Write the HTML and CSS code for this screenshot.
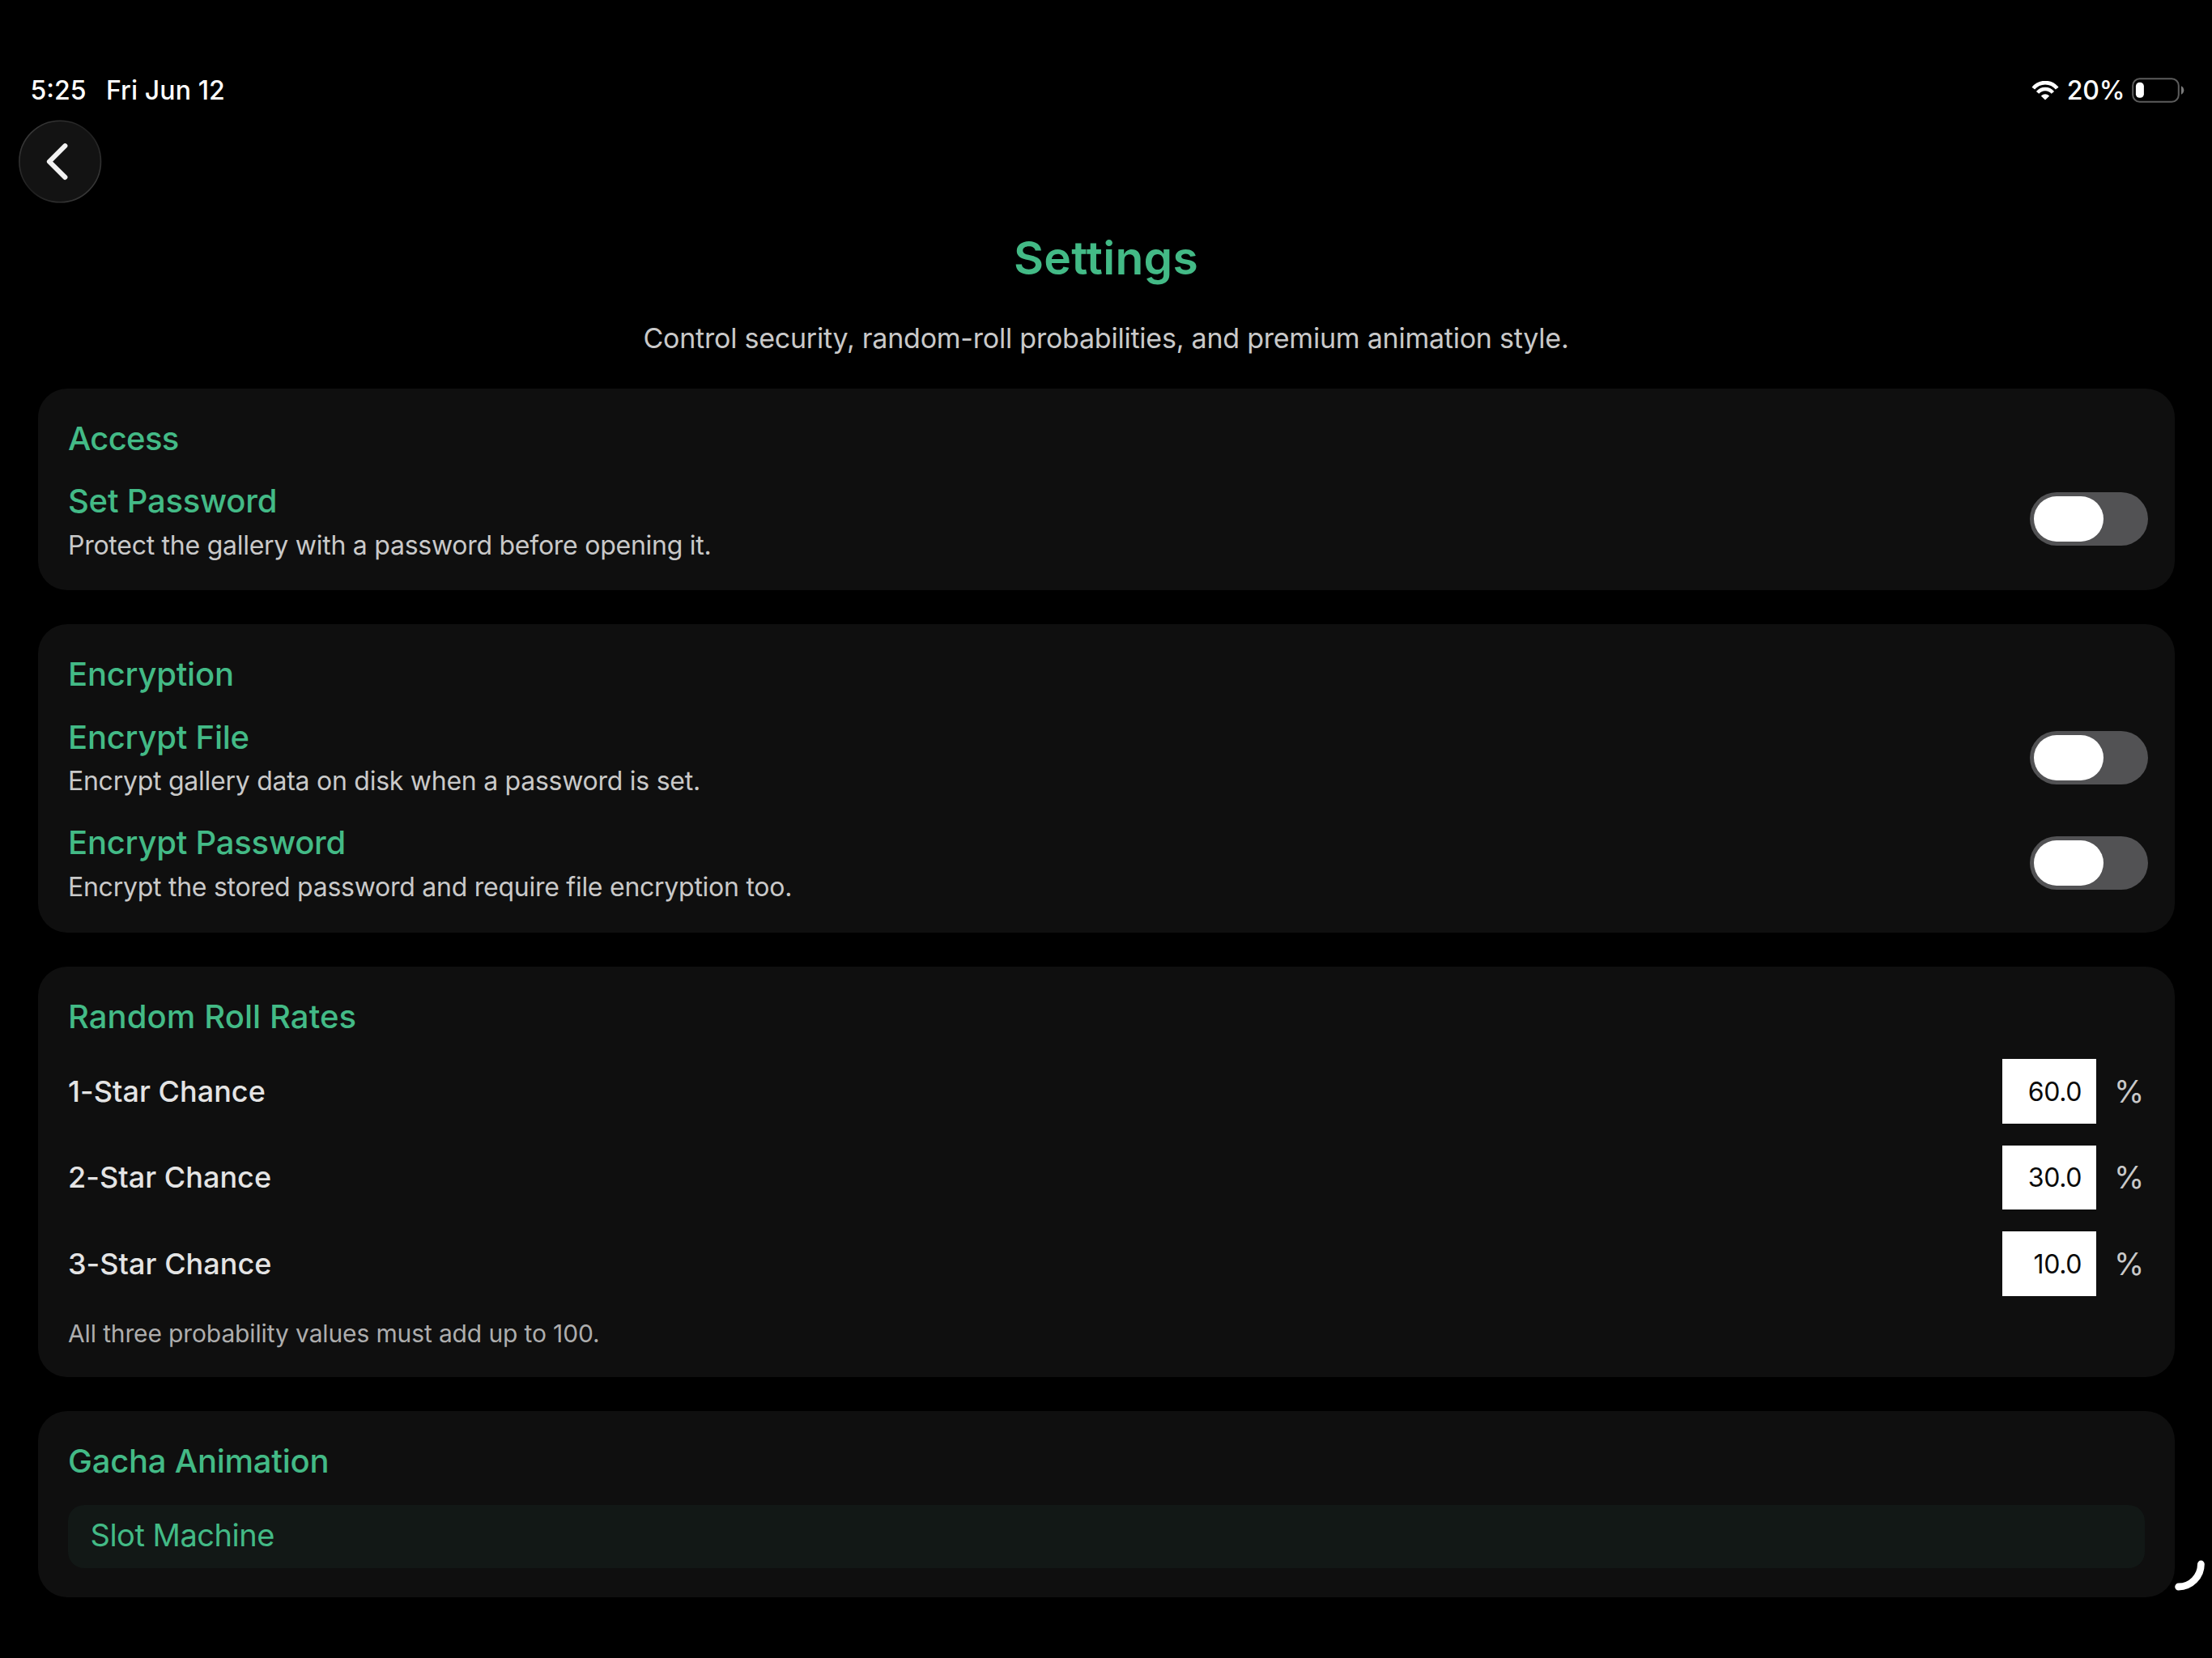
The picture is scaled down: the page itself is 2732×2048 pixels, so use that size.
FILE: index.html
```html
<!DOCTYPE html>
<html lang="en">
<head>
<meta charset="utf-8">
<title>Settings</title>
<link rel="stylesheet" href="styles.css">
</head>
<body>
<header class="status">
  <span class="status-time">5:25</span>
  <span class="status-date">Fri Jun 12</span>
  <svg class="wifi" viewBox="0 0 34 24" aria-hidden="true">
    <path d="M2.3 9.1A18.9 18.9 0 0 1 31.7 9.1" fill="none" stroke="#fff" stroke-width="4.6"/>
    <path d="M7.6 14.4A12.2 12.2 0 0 1 26.4 14.4" fill="none" stroke="#fff" stroke-width="4.4"/>
    <path d="M11.8 18.4Q17 14.3 22.2 18.4L17 23.6Z" fill="#fff"/>
  </svg>
  <span class="status-level">20%</span>
  <svg class="battery" viewBox="0 0 65 31" aria-hidden="true">
    <rect x="1.2" y="1.3" width="56.6" height="28.4" rx="8.5" fill="none" stroke="#5c5c5c" stroke-width="2"/>
    <rect x="4.9" y="5.8" width="10" height="19" rx="4.6" fill="#fff"/>
    <path d="M61 10.3Q64.3 12.2 64.3 15.5Q64.3 18.8 61 20.7Z" fill="#7a7a7a"/>
  </svg>
</header>

<nav class="toolbar">
  <button class="back" aria-label="Back">
    <svg class="back-icon" viewBox="0 0 104 104" aria-hidden="true">
      <defs>
        <linearGradient id="rim" x1="0.1" y1="0.1" x2="0.9" y2="0.9">
          <stop offset="0" stop-color="#3a3a3a"/>
          <stop offset="0.5" stop-color="#1e1e1e"/>
          <stop offset="1" stop-color="#3a3a3a"/>
        </linearGradient>
      </defs>
      <circle cx="51.2" cy="51.5" r="50.3" fill="#131313" stroke="url(#rim)" stroke-width="1.6"/>
      <path d="M57.4 32.2L37.9 51.6L57.4 71" fill="none" stroke="#f2f2f2" stroke-width="6" stroke-linecap="round" stroke-linejoin="round"/>
    </svg>
  </button>
</nav>

<main class="page">
  <h1 class="title">Settings</h1>
  <p class="subtitle">Control security, random-roll probabilities, and premium animation style.</p>

  <section class="card">
    <h2 class="heading heading-tight">Access</h2>
    <div class="option">
      <div class="option-text">
        <h3 class="heading">Set Password</h3>
        <p class="desc">Protect the gallery with a password before opening it.</p>
      </div>
      <span class="toggle toggle-raised" role="switch" aria-checked="false"><span class="knob"></span></span>
    </div>
  </section>

  <section class="card">
    <h2 class="heading">Encryption</h2>
    <div class="option">
      <div class="option-text">
        <h3 class="heading">Encrypt File</h3>
        <p class="desc">Encrypt gallery data on disk when a password is set.</p>
      </div>
      <span class="toggle" role="switch" aria-checked="false"><span class="knob"></span></span>
    </div>
    <div class="option">
      <div class="option-text">
        <h3 class="heading">Encrypt Password</h3>
        <p class="desc">Encrypt the stored password and require file encryption too.</p>
      </div>
      <span class="toggle" role="switch" aria-checked="false"><span class="knob"></span></span>
    </div>
  </section>

  <section class="card">
    <h2 class="heading heading-wide">Random Roll Rates</h2>
    <div class="rates">
      <label class="rate"><span class="rate-label">1-Star Chance</span><input class="rate-input" type="text" value="60.0"><span class="percent">%</span></label>
      <label class="rate"><span class="rate-label">2-Star Chance</span><input class="rate-input" type="text" value="30.0"><span class="percent">%</span></label>
      <label class="rate"><span class="rate-label">3-Star Chance</span><input class="rate-input" type="text" value="10.0"><span class="percent">%</span></label>
    </div>
    <p class="note">All three probability values must add up to 100.</p>
  </section>

  <section class="card">
    <h2 class="heading">Gacha Animation</h2>
    <div class="select">Slot Machine</div>
  </section>
</main>

<svg class="corner-arc" viewBox="0 0 40 40" aria-hidden="true">
  <path d="M32.4 6A28 28 0 0 1 4.6 34" fill="none" stroke="#fff" stroke-width="8.8" stroke-linecap="round"/>
</svg>
</body>
</html>
```
FILE: styles.css
```css
* {
  box-sizing: border-box;
}

body {
  margin: 0;
  width: 2732px;
  height: 2048px;
  overflow: hidden;
  position: relative;
  background: #000;
  color: #fff;
  font-family: Inter, "Liberation Sans", sans-serif;
}

h1, h2, h3, p {
  margin: 0;
}

.status {
  display: flex;
  align-items: center;
  height: 132px;
  padding: 92px 33.7px 0 37.5px;
  font-size: 32px;
  font-weight: 500;
  line-height: 40px;
}

.status-date {
  margin-left: 24.5px;
  letter-spacing: 0.1px;
}

.wifi {
  width: 34px;
  height: 24px;
  margin-left: auto;
}

.status-level {
  margin-left: 10px;
  letter-spacing: -0.2px;
}

.battery {
  width: 65px;
  height: 31px;
  margin: 0 0 1px 9px;
}

.toolbar {
  padding: 16px 0 0 23px;
  height: 118px;
}

.back {
  display: block;
  width: 104px;
  height: 104px;
  padding: 0;
  border: 0;
  background: none;
}

.back-icon {
  display: block;
  width: 104px;
  height: 104px;
}

.page {
  padding: 34px 46px 0 47px;
}

.title {
  padding-right: 1px;
  color: #43ba86;
  font-size: 57px;
  font-weight: 600;
  line-height: 70px;
  letter-spacing: 0.25px;
  text-align: center;
}

.subtitle {
  margin: 43px 0 41px;
  padding-right: 1px;
  color: #c9c9c9;
  font-size: 34px;
  line-height: 42px;
  letter-spacing: -0.23px;
  text-align: center;
}

.card {
  padding: 37px 37px 35.5px;
  border-radius: 36px;
  background: #0f0f0f;
}

.card + .card {
  margin-top: 42px;
}

.heading {
  color: #43ba86;
  font-size: 40px;
  font-weight: 500;
  line-height: 50px;
  letter-spacing: -0.23px;
}

.heading-tight {
  letter-spacing: -0.7px;
}

.heading-wide {
  letter-spacing: 0.09px;
}

.option {
  display: flex;
  align-items: center;
  justify-content: space-between;
  margin-top: 27.3px;
}

.option + .option {
  margin-top: 31px;
}

.desc {
  margin-top: 9.7px;
  color: #c9c9c9;
  font-size: 32px;
  line-height: 40px;
  letter-spacing: -0.26px;
}

.toggle {
  width: 146px;
  height: 66px;
  margin-right: -4px;
  padding: 5px;
  border-radius: 33px;
  background: #525254;
}

.toggle-raised {
  margin-bottom: 6px;
}

.knob {
  display: block;
  width: 86px;
  height: 56px;
  border-radius: 28px;
  background: #fff;
}

.rates {
  display: grid;
  gap: 27px;
  margin-top: 27.5px;
}

.rate {
  display: grid;
  grid-template-columns: 1fr 116px 38px;
  column-gap: 22.5px;
  align-items: center;
}

.rate-label {
  margin-right: -22px;
  color: #e4e4e4;
  font-size: 36px;
  font-weight: 500;
  line-height: 46px;
  letter-spacing: 0.04px;
}

.rate-input {
  width: 116px;
  height: 79.5px;
  padding: 1px 17.5px 0 0;
  border: 0;
  border-radius: 0;
  background: #fff;
  color: #0a0a0a;
  font: 400 32px Inter, "Liberation Sans", sans-serif;
  letter-spacing: -0.4px;
  text-align: right;
}

.percent {
  color: #c9c9c9;
  font-size: 38px;
  line-height: 46px;
}

.note {
  margin-top: 27px;
  color: #adadad;
  font-size: 30px;
  line-height: 38px;
  letter-spacing: -0.132px;
}

.select {
  height: 78.5px;
  margin-top: 28.5px;
  padding: 13.5px 27.5px 0;
  border-radius: 20px;
  background: #121816;
  color: #43ba86;
  font-size: 38px;
  line-height: 48px;
  letter-spacing: -0.48px;
}

.corner-arc {
  position: absolute;
  left: 2686px;
  top: 1926px;
  width: 40px;
  height: 40px;
}
```
